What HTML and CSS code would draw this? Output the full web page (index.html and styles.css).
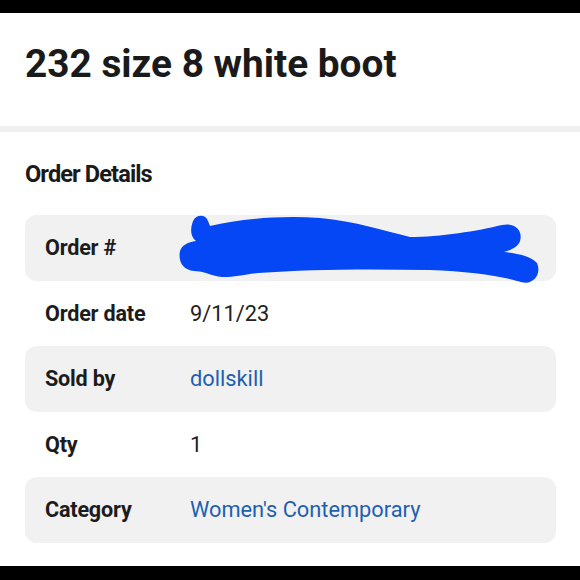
FILE: index.html
```html
<!DOCTYPE html>
<html lang="en">
<head>
<meta charset="utf-8">
<link rel="stylesheet" href="styles.css">
</head>
<body>
<div class="page">
  <div class="bar bar-top"></div>
  <header class="title-wrap">
    <h1 class="title">232 size 8 white boot</h1>
  </header>
  <div class="band"></div>
  <section class="details">
    <h2 class="section-title">Order Details</h2>
    <div class="rows">
      <div class="row shaded">
        <span class="label">Order #</span>
        <span class="value"></span>
        <svg class="scribble" viewBox="176 210 366 78" width="366" height="78" aria-hidden="true">
          <path fill="#0547f4" d="M196 241 C189 235 191 227 193 221 C196 214 206 214 208 221 L210 226 C240 219 280 215 320 218 C355 221 385 231 410 237 C440 237 478 231 502 225 C516 222 523 232 520 241 C518 247 511 250 504 252 C516 253 531 256 537 263 C542 274 533 286 521 282 C505 277 470 271 430 270 C370 269 310 269 258 273 C240 275 226 279 216 276 C208 274 202 271 194 271 C183 270 178 262 180 251 C182 245 188 242 196 241 Z"/>
        </svg>
      </div>
      <div class="row">
        <span class="label">Order date</span>
        <span class="value">9/11/23</span>
      </div>
      <div class="row shaded">
        <span class="label">Sold by</span>
        <span class="value link">dollskill</span>
      </div>
      <div class="row">
        <span class="label">Qty</span>
        <span class="value">1</span>
      </div>
      <div class="row shaded">
        <span class="label">Category</span>
        <span class="value link">Women's Contemporary</span>
      </div>
    </div>
  </section>
  <div class="bar bar-bottom"></div>
</div>
</body>
</html>
```

FILE: styles.css
```css
html, body {
  margin: 0;
  padding: 0;
  background: #ffffff;
}

.page {
  width: 580px;
  height: 580px;
  display: flex;
  flex-direction: column;
  font-family: Roboto, "Noto Sans", sans-serif;
  color: #1b1b1b;
  overflow: hidden;
}

.bar {
  background: #000000;
  flex: none;
}

.bar-top {
  height: 13px;
}

.bar-bottom {
  height: 14px;
}

.title-wrap {
  height: 113px;
  box-sizing: border-box;
  padding: 29px 25px 0 25px;
  flex: none;
}

.title {
  margin: 0;
  font-size: 38.8px;
  line-height: 44px;
  font-weight: 700;
  color: #1a1a1a;
}

.band {
  height: 6px;
  background: #f0f0f0;
  flex: none;
}

.details {
  flex: 1;
  padding: 28px 24px 0 25px;
}

.section-title {
  margin: 0 0 27px 0;
  font-size: 23.6px;
  line-height: 28px;
  font-weight: 700;
  letter-spacing: -0.9px;
  color: #1a1a1a;
}

.rows {
  display: flex;
  flex-direction: column;
}

.row {
  position: relative;
  height: 65.5px;
  display: flex;
  align-items: center;
  padding-left: 20px;
  border-radius: 12px;
}

.row.shaded {
  background: #f1f1f1;
}

.label {
  width: 145px;
  flex: none;
  font-size: 21.6px;
  font-weight: 700;
  letter-spacing: -0.2px;
  color: #1c1c1c;
}

.value {
  font-size: 21.8px;
  font-weight: 400;
  color: #222222;
}

.value.link {
  color: #1e5fb2;
}

.scribble {
  position: absolute;
  left: 151px;
  top: -5px;
}
```
